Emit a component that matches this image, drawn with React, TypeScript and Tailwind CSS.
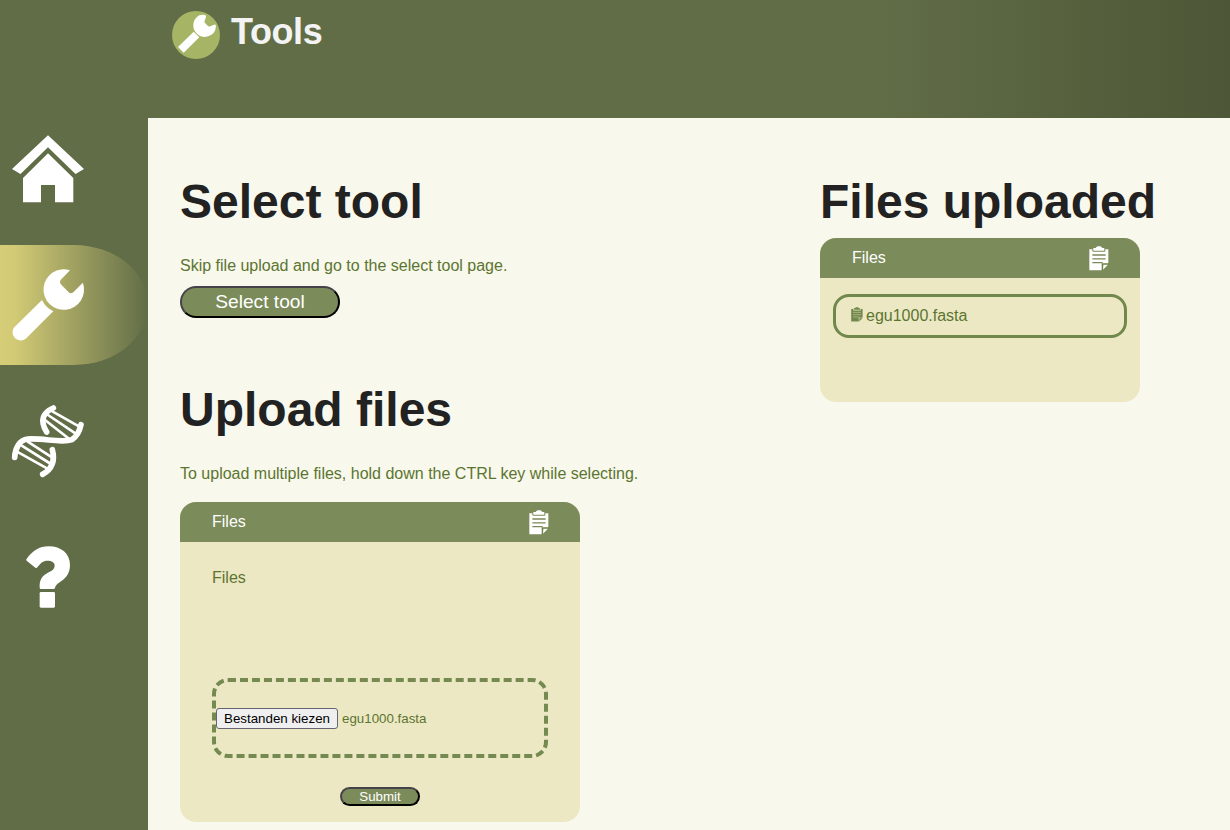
import React from "react";

function Clipboard({ className, fold, line }: { className: string; fold: string; line: string }) {
  return (
    <svg className={className} viewBox="0 0 60 75" preserveAspectRatio="none">
      <path fill="currentColor" d="M1 10H10V14Q10 17 13 17H47Q49 17 49 14V10H58V52L39 73H1Z" />
      <path fill="currentColor" d="M13 6H20C22 -1 38 -1 40 6H46V14H13Z" />
      <path fill="none" stroke={line} strokeWidth="4" d="M10 27H50M10 38.5H50M10 50H41" />
      <path fill={fold} d="M38 52H60V54L39 75H38Z" />
      <path fill="currentColor" d="M43 56H57L42 71Z" />
    </svg>
  );
}

function HomeIcon() {
  return (
    <svg className="size-24" viewBox="0 120 96 96" fill="#fff">
      <path d="M48 135.3 84 169 75.5 174 48 147.3 20.5 174 12 169Z" />
      <path d="M48 153.3 73.3 178V202.3H55V185H41V202.3H23V178Z" />
    </svg>
  );
}

function WrenchIcon() {
  return (
    <svg className="size-24" viewBox="0 257 96 96" fill="#fff">
      <path d="M70 270.2A20.3 20.3 0 1 0 83 283Q82.6 282.9 82 283.5L73 292.4Q70.8 294 68.7 292.3L60.6 284Q59.2 282 60.6 280Z" />
      <path d="M42 300Q45.5 307.5 53.3 311.2L26 338.5A8.2 8.2 0 0 1 14 327.5Z" />
    </svg>
  );
}

function DnaIcon() {
  return (
    <svg className="size-24" viewBox="0 9 288 288" fill="none" stroke="#fff" strokeLinecap="round">
      <g strokeWidth="17">
        <path d="M160 54C131 67 117 89 140 126" />
        <path d="M243 104C239 122 230 140 216 149C184 160 132 144 83 147C58 149 45 176 44 202" />
        <path d="M157 179C163 202 163 233 128 253" />
      </g>
      <g strokeWidth="8">
        <path d="M157 64 238 110M144 75 226 130M135 90 208 147" />
        <path d="M55 187 137 233M64 166 148 219M82 154 156 202" />
      </g>
    </svg>
  );
}

function QuestionIcon() {
  return (
    <svg className="size-24" viewBox="0 417 288 288" fill="#fff">
      <path d="M79 508C99 481 117 469 146 469C184 469 210 491 210 525C210 554 193 568 179 577C169 584 166 588 165 594Q164 597 160 597H123Q119 597 119 593C118 569 126 558 146 547C158 541 164 536 164 527C164 517 155 512 143 512C129 512 121 520 112 532Q110 535 106 533L80 512Q78 510 79 508Z" />
      <rect x="119" y="606" width="46" height="47" rx="4" />
    </svg>
  );
}

function BadgeIcon() {
  return (
    <svg className="h-12 w-12" viewBox="36 33 144 144">
      <circle cx="108" cy="105" r="72" fill="#a5b565" />
      <g fill="#fff">
        <path d="M135 45Q139 47 138 51L134 62Q132 66 135 69L144 78Q147 81 151 79L162 74Q167 73 168 78A34 34 0 0 1 107 97A34 34 0 0 1 118 46Q127 43 135 45Z" />
        <path d="M101 95 118 112 71 158 54 141Z" />
      </g>
    </svg>
  );
}

function CardHeader() {
  return (
    <div className="flex h-10 items-start justify-between bg-[#7b8b5a] pr-[31px] pl-8 text-white">
      <span className="leading-10">Files</span>
      <Clipboard className="mt-2 h-[25px] w-5" fold="#6e8048" line="#7b8b5a" />
    </div>
  );
}

export default function App() {
  return (
    <div className="flex h-[830px] w-full flex-col overflow-hidden bg-[#616d47] font-['Liberation_Sans',Arial,sans-serif] text-base text-[#5b7531]">
      <header className="flex h-[118px] shrink-0 items-start bg-[linear-gradient(to_right,#616d47_0,#616d47_880px,#4d5636_1230px)] pt-[11px] pl-[172px]">
        <BadgeIcon />
        <h1 className="ml-[11px] text-4xl leading-[42px] font-bold tracking-[-0.4px] text-[#f3f3f3]">Tools</h1>
      </header>
      <div className="flex min-h-0 flex-1">
        <nav className="flex w-[148px] shrink-0 flex-col">
          <a className="h-[127px] pt-0.5"><HomeIcon /></a>
          <a className="flex h-[120px] items-center rounded-r-[50%] bg-[linear-gradient(to_right,#d5cd77_0%,#d2ca75_10%,#616d47_100%)]"><WrenchIcon /></a>
          <a className="mt-7 h-24"><DnaIcon /></a>
          <a className="mt-10 h-24"><QuestionIcon /></a>
        </nav>
        <main className="flex flex-1 items-start bg-[#f9f8ec] pt-[60px] pl-8">
          <div className="w-[640px]">
            <section className="h-[208px]">
              <h2 className="text-5xl leading-none font-bold text-[#222]">Select tool</h2>
              <p className="mt-[31px] leading-[18px]">Skip file upload and go to the select tool page.</p>
              <button className="mt-[11px] block h-8 w-40 rounded-2xl border-2 border-t-[#45434a] border-r-black border-b-black border-l-[#45434a] bg-[#7b8b5a] text-[19.2px] leading-[26px] text-white"><span className="block leading-[26px]">Select tool</span></button>
            </section>
            <section>
              <h2 className="text-5xl leading-none font-bold text-[#222]">Upload files</h2>
              <p className="mt-[31px] leading-[18px]">To upload multiple files, hold down the CTRL key while selecting.</p>
              <div className="mt-[19px] h-80 w-[400px] overflow-hidden rounded-2xl bg-[#ede8c4]">
                <CardHeader />
                <div className="flex flex-col px-8 pt-[27px]">
                  <p className="leading-[18px]">Files</p>
                  <div className="mt-[91px] flex h-20 items-center rounded-2xl border-4 border-dashed border-[#748a50] text-[13.333px]">
                    <button className="h-[21px] w-[122px] rounded-[3px] border border-[#666672] bg-[#efefef] leading-5 whitespace-nowrap text-black">Bestanden kiezen</button>
                    <span className="ml-1 pt-0.5">egu1000.fasta</span>
                  </div>
                  <button className="mt-[29px] h-[19px] w-20 self-center rounded-full border-2 border-t-[#45434a] border-r-black border-b-black border-l-[#45434a] bg-[#7b8b5a] text-[13.333px] leading-[15px] text-white">Submit</button>
                </div>
              </div>
            </section>
          </div>
          <section className="w-[350px]">
            <h2 className="text-5xl leading-none font-bold whitespace-nowrap text-[#222]">Files uploaded</h2>
            <div className="mt-3 h-[164px] w-80 overflow-hidden rounded-2xl bg-[#ede8c4]">
              <CardHeader />
              <div className="mt-4 ml-[13px] flex h-11 w-[294px] items-center rounded-2xl border-3 border-[#71884d] pl-[15px]">
                <Clipboard className="mb-[3px] h-[15px] w-[12px] text-[#71884d]" fold="#c5c79b" line="#b5ba8a" />
                <span className="ml-[3px] leading-[18px]">egu1000.fasta</span>
              </div>
            </div>
          </section>
        </main>
      </div>
    </div>
  );
}
